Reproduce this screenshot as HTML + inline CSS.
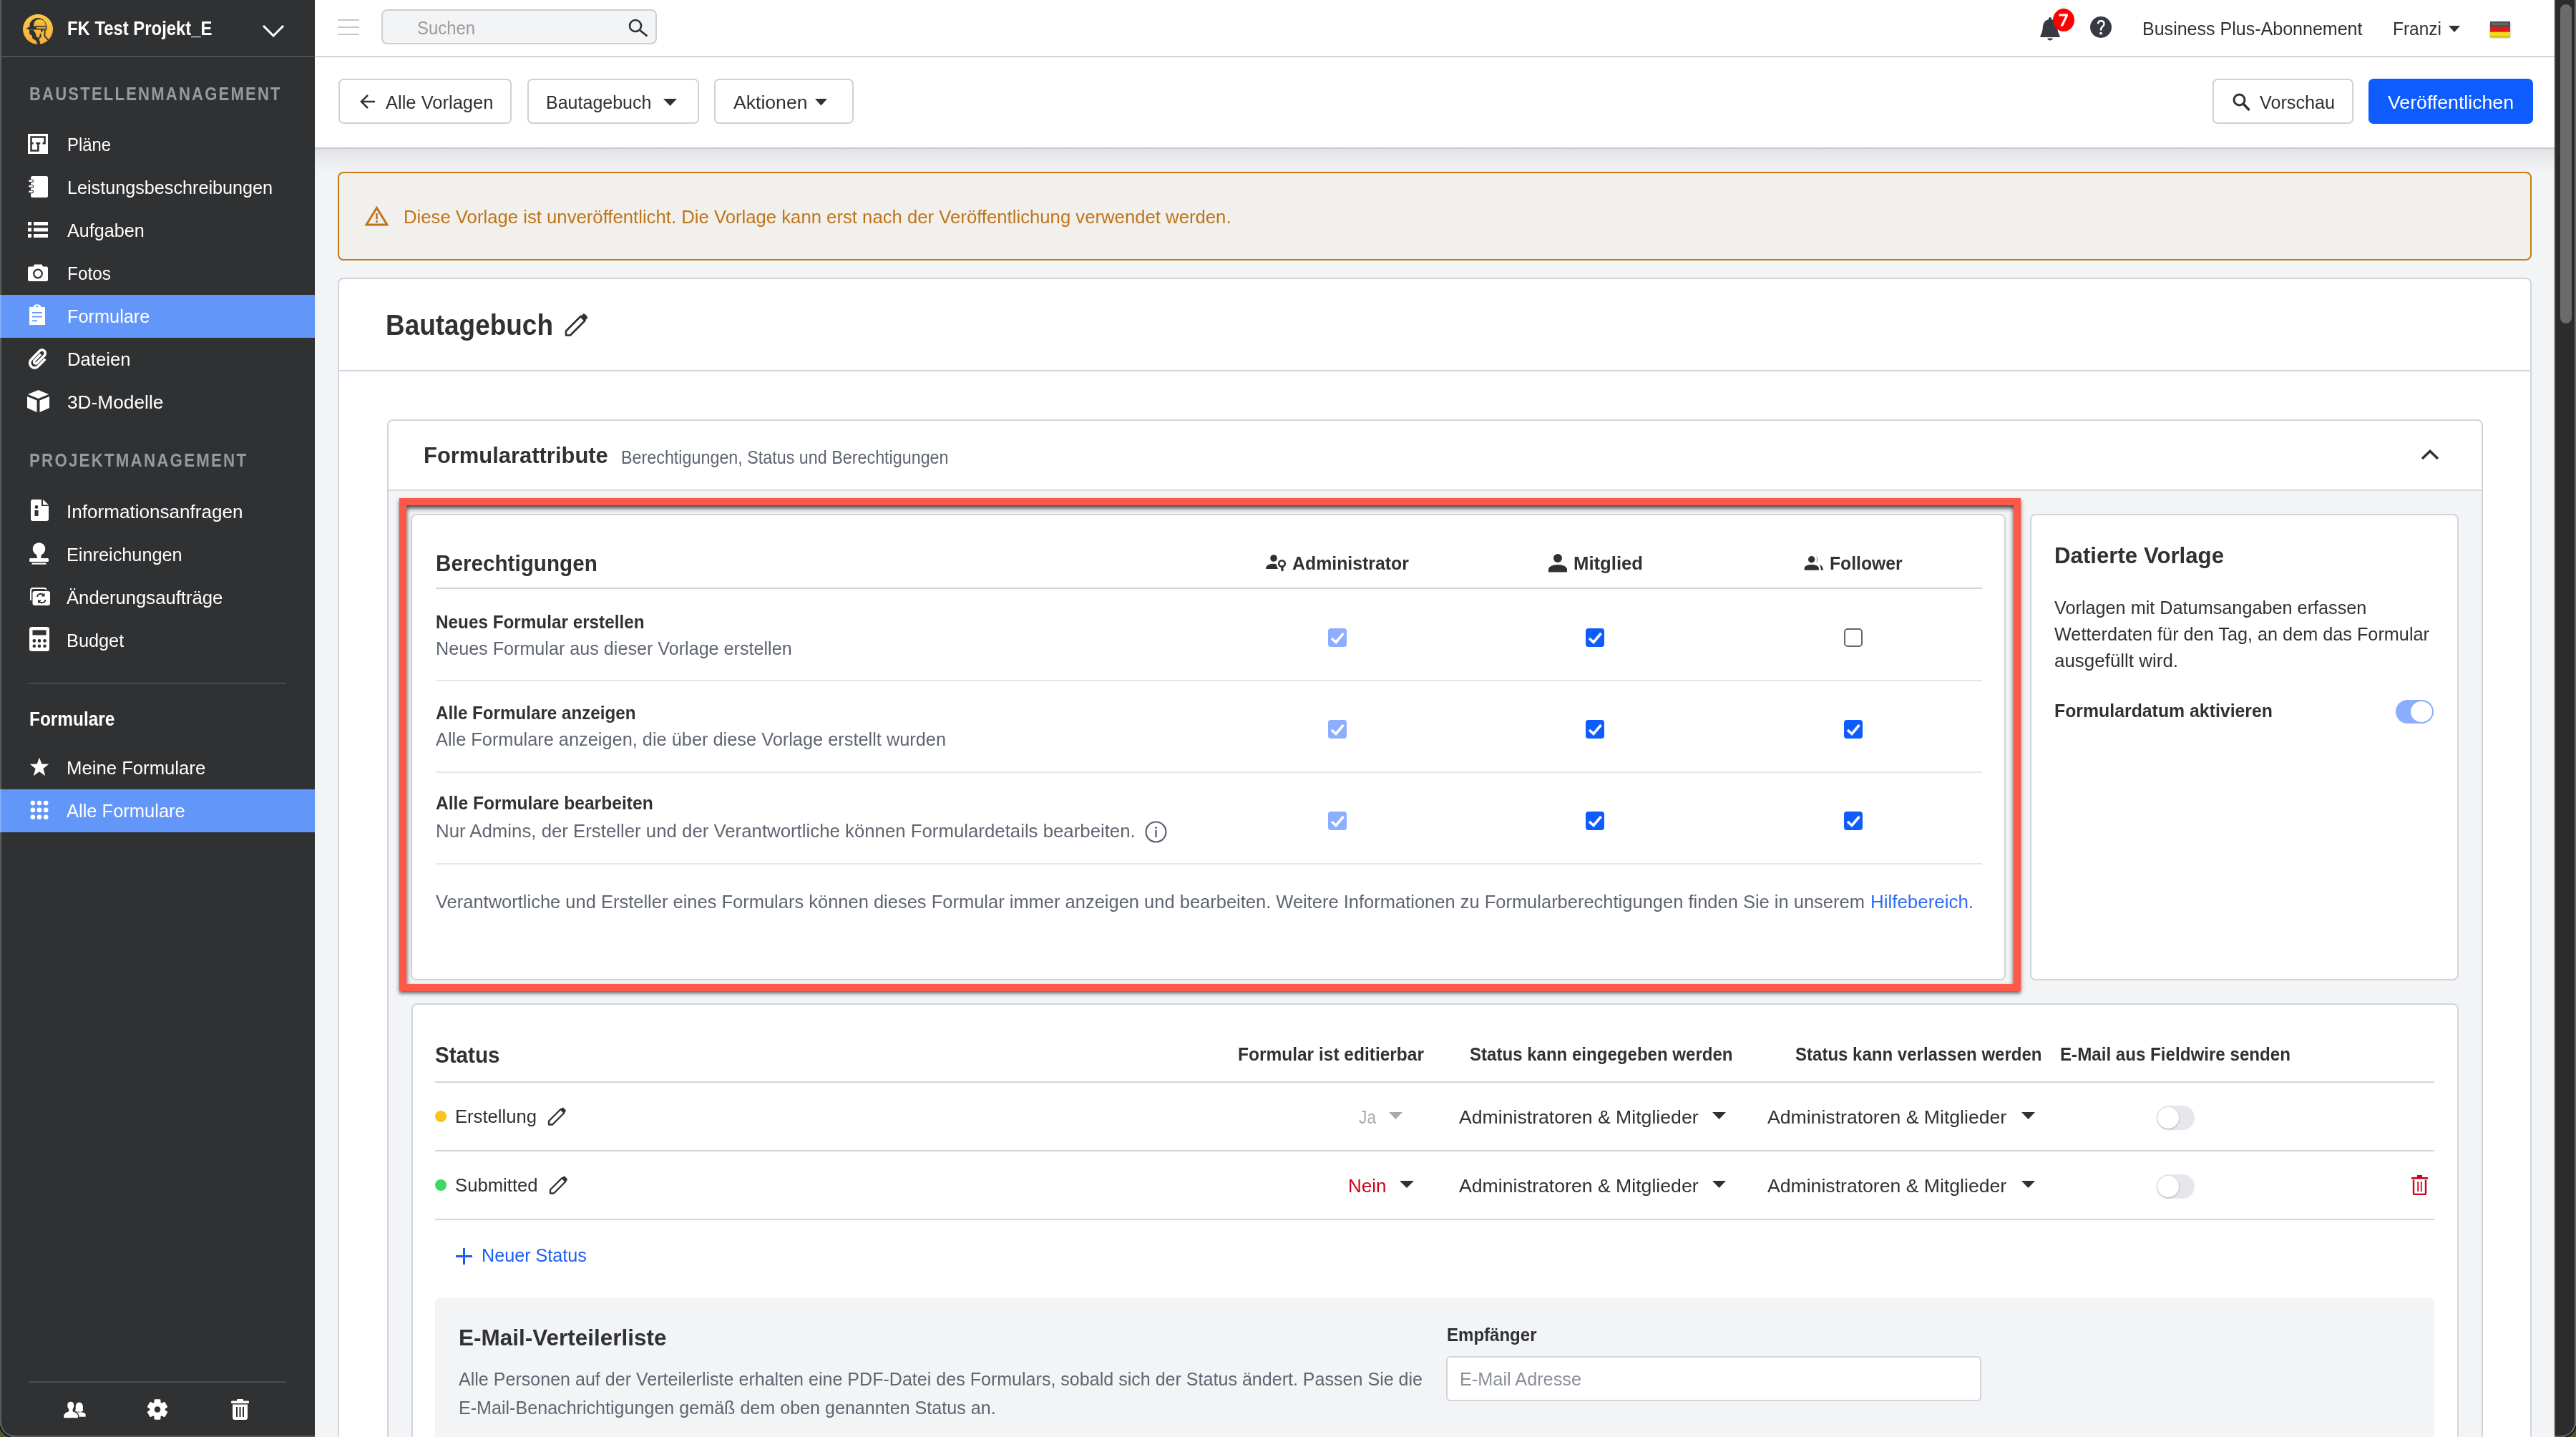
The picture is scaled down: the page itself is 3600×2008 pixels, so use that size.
<!DOCTYPE html><html><head><meta charset="utf-8"><style>
html,body{margin:0;padding:0;width:3600px;height:2008px;overflow:hidden;font-family:"Liberation Sans",sans-serif;}
</style></head><body>
<div style="position:absolute;left:0px;top:0px;width:3600px;height:2008px;background:#4a5a28;"></div>
<div style="position:absolute;left:0;top:0;width:3600px;height:2008px;border-radius:0 0 21px 21px;overflow:hidden;background:#f3f4f6;box-shadow:0 0 0 2px #0a0a0a;">
<div style="position:absolute;left:0px;top:0px;width:440px;height:2008px;background:#303133;"></div>
<div style="position:absolute;left:2px;top:78px;width:438px;height:2px;background:#4f5053;"></div>
<svg style="position:absolute;left:30px;top:18px;" width="46" height="46" viewBox="0 0 46 46"><defs><linearGradient id="lg" x1="0" y1="0" x2="0" y2="1"><stop offset="0" stop-color="#fdc942"/><stop offset="1" stop-color="#f2ae3b"/></linearGradient></defs><circle cx="23" cy="22.8" r="21" fill="url(#lg)"/><path fill="#303133" d="M6.2 22.3 L11.5 19 L11.8 14 L15 10 L20 7.3 L25 7 L30 9 L33.5 13.3 L35.2 18 L35.6 23.6 L11 23.6Z"/><path fill="url(#lg)" d="M17 18.6 C17 12 20.5 9 25 9 C29.5 9 33.8 12 33.8 18.6Z"/><rect x="20.8" y="20" width="13.2" height="1.9" fill="#e9ac3c"/><path fill="#303133" d="M11 23.5 L11.2 29.5 L14.5 31.5 L15.5 36 L20 38.5 L23 44.5 L26.5 44.5 L24.8 37 L26 34.5 L21.5 34.3 L20.3 31 L19.5 28 L16.5 24Z"/><path fill="#303133" d="M25 33 L26 29 L27.3 29 L27.6 33.5 L25.8 35.5Z M26.8 23.5 L31 23.5 L27.5 27.8Z"/><polyline points="32.9,23.4 32.3,32.5 37.4,38.2" fill="none" stroke="#303133" stroke-width="1.9"/></svg>
<div id="t1" style="position:absolute;left:94px;top:26.35px;font-size:28px;line-height:28px;white-space:nowrap;color:#ffffff;font-weight:700;transform:scaleX(0.8523);transform-origin:0 0;">FK Test Projekt_E</div>
<svg style="position:absolute;left:366px;top:34px;" width="32" height="18" viewBox="0 0 32 18"><polyline points="2,2 16,16 30,2" fill="none" stroke="#fff" stroke-width="3"/></svg>
<div id="t2" style="position:absolute;left:40.5px;top:118.74px;font-size:25px;line-height:25px;white-space:nowrap;color:#97999e;font-weight:700;letter-spacing:2.5px;transform:scaleX(0.8818);transform-origin:0 0;">BAUSTELLENMANAGEMENT</div>
<div style="position:absolute;left:0px;top:412px;width:440px;height:60px;background:#6396f9;"></div>
<div style="position:absolute;left:0px;top:1103px;width:440px;height:60px;background:#6396f9;"></div>
<div id="t3" style="position:absolute;left:94px;top:189.21px;font-size:26px;line-height:26px;white-space:nowrap;color:#ffffff;transform:scaleX(0.9173);transform-origin:0 0;">Pläne</div>
<div id="t4" style="position:absolute;left:94px;top:249.21px;font-size:26px;line-height:26px;white-space:nowrap;color:#ffffff;transform:scaleX(0.9686);transform-origin:0 0;">Leistungsbeschreibungen</div>
<div id="t5" style="position:absolute;left:94px;top:309.21px;font-size:26px;line-height:26px;white-space:nowrap;color:#ffffff;transform:scaleX(0.9668);transform-origin:0 0;">Aufgaben</div>
<div id="t6" style="position:absolute;left:94px;top:369.21px;font-size:26px;line-height:26px;white-space:nowrap;color:#ffffff;transform:scaleX(0.9369);transform-origin:0 0;">Fotos</div>
<div id="t7" style="position:absolute;left:94px;top:429.21px;font-size:26px;line-height:26px;white-space:nowrap;color:#ffffff;transform:scaleX(0.9738);transform-origin:0 0;">Formulare</div>
<div id="t8" style="position:absolute;left:94px;top:489.21px;font-size:26px;line-height:26px;white-space:nowrap;color:#ffffff;transform:scaleX(0.9888);transform-origin:0 0;">Dateien</div>
<div id="t9" style="position:absolute;left:94px;top:549.21px;font-size:26px;line-height:26px;white-space:nowrap;color:#ffffff;transform:scaleX(1.0105);transform-origin:0 0;">3D-Modelle</div>
<svg style="position:absolute;left:39px;top:187px;" width="28" height="28" viewBox="0 0 28 28"><rect width="28" height="28" fill="#fff"/><path fill="#303133" d="M3.25 3.25H24.8V5.75H3.25Z M3.25 3.25H5.75V24.8H3.25Z M3.25 22.3H15.6V24.8H3.25Z M22.3 3.25H24.8V14.4H22.3Z M20.5 12H24.8V14.4H20.5Z M11.2 12H17.3V14.4H11.2Z M13.1 12H15.6V24.8H13.1Z M5.75 12H7.7V14.4H5.75Z"/></svg>
<svg style="position:absolute;left:39px;top:246px;" width="28" height="30" viewBox="0 0 28 30"><rect x="4" y="0" width="24" height="30" rx="2.5" fill="#fff"/><rect x="0.5" y="5" width="7" height="3.6" rx="1.8" fill="#fff" stroke="#303133" stroke-width="1.2"/><rect x="0.5" y="12.5" width="7" height="3.6" rx="1.8" fill="#fff" stroke="#303133" stroke-width="1.2"/><rect x="0.5" y="20" width="7" height="3.6" rx="1.8" fill="#fff" stroke="#303133" stroke-width="1.2"/></svg>
<svg style="position:absolute;left:39px;top:310px;" width="28" height="22" viewBox="0 0 28 22"><path fill="#fff" d="M0 0H5V5H0Z M8 0H28V5H8Z M0 8.5H5V13.5H0Z M8 8.5H28V13.5H8Z M0 17H5V22H0Z M8 17H28V22H8Z"/></svg>
<svg style="position:absolute;left:39px;top:369px;" width="28" height="24" viewBox="0 0 28 24"><path fill="#fff" d="M7.5 3.5 L9 0.5 H19.5 L21 3.5 H26 Q28 3.5 28 5.5 V22 Q28 24 26 24 H2 Q0 24 0 22 V5.5 Q0 3.5 2 3.5Z"/><circle cx="14" cy="13.5" r="5.8" fill="none" stroke="#303133" stroke-width="2.2"/></svg>
<svg style="position:absolute;left:41px;top:425px;" width="22" height="29" viewBox="0 0 22 29"><path fill="#fff" d="M0 4 H5 L7 1.5 Q11 -1 15 1.5 L17 4 H22 V29 H0Z"/><circle cx="11" cy="3.2" r="1.3" fill="#6396f9"/><rect x="4" y="11" width="14" height="1.8" fill="#6396f9"/><rect x="4" y="16.7" width="14" height="1.8" fill="#6396f9"/><rect x="4" y="22.4" width="7" height="1.8" fill="#6396f9"/></svg>
<svg style="position:absolute;left:40px;top:487px;" width="25" height="29" viewBox="0 0 448 512"><path fill="#fff" d="M43.246 466.142c-58.43-60.289-57.341-157.511 1.386-217.581L254.392 34c44.316-45.332 116.351-45.336 160.671 0 43.89 44.894 43.943 117.329 0 162.276L232.214 383.128c-29.855 30.537-78.633 30.111-107.982-.998-28.275-29.97-27.368-77.473 1.452-106.953l143.743-146.835c6.182-6.314 16.312-6.422 22.626-.241l22.861 22.379c6.315 6.182 6.422 16.312.241 22.626L171.427 319.927c-4.932 5.045-5.236 13.428-.648 18.292 4.372 4.634 11.245 4.711 15.688.165l182.849-186.851c19.613-20.062 19.613-52.725-.011-72.798-19.189-19.627-49.957-19.637-69.154 0L90.39 293.295c-34.763 35.56-35.299 93.12-1.191 128.313 34.01 35.093 88.985 35.137 123.058.286l172.06-175.999c6.177-6.319 16.307-6.433 22.626-.256l22.877 22.362c6.319 6.177 6.434 16.307.256 22.626l-172.06 175.998c-59.576 60.938-155.943 60.216-214.77-.483z"/></svg>
<svg style="position:absolute;left:38px;top:545px;" width="31" height="31" viewBox="0 0 31 31"><path fill="#fff" d="M15.5 0 L30 6 L15.5 12 L1 6Z M0 9 L13.5 14.5 V31 L0 25Z M17.5 14.5 L31 9 V25 L17.5 31Z"/></svg>
<div id="t10" style="position:absolute;left:40.5px;top:630.74px;font-size:25px;line-height:25px;white-space:nowrap;color:#97999e;font-weight:700;letter-spacing:2.5px;transform:scaleX(0.8912);transform-origin:0 0;">PROJEKTMANAGEMENT</div>
<div id="t11" style="position:absolute;left:93px;top:702.21px;font-size:26px;line-height:26px;white-space:nowrap;color:#ffffff;transform:scaleX(1.0028);transform-origin:0 0;">Informationsanfragen</div>
<div id="t12" style="position:absolute;left:93px;top:762.21px;font-size:26px;line-height:26px;white-space:nowrap;color:#ffffff;transform:scaleX(0.9723);transform-origin:0 0;">Einreichungen</div>
<div id="t13" style="position:absolute;left:93px;top:822.21px;font-size:26px;line-height:26px;white-space:nowrap;color:#ffffff;transform:scaleX(0.9873);transform-origin:0 0;">Änderungsaufträge</div>
<div id="t14" style="position:absolute;left:93px;top:882.21px;font-size:26px;line-height:26px;white-space:nowrap;color:#ffffff;transform:scaleX(0.9733);transform-origin:0 0;">Budget</div>
<svg style="position:absolute;left:43px;top:698px;" width="25" height="31" viewBox="0 0 25 31"><path fill="#fff" d="M3 0 H15 V9 H25 V27 Q25 30 22 30 H3 Q0 30 0 27 V3 Q0 0 3 0Z M17 0 L25 7.5 H17Z"/><circle cx="8" cy="10.5" r="2.4" fill="#303133"/><rect x="5.5" y="15" width="5" height="8" fill="#303133"/></svg>
<svg style="position:absolute;left:41px;top:758px;" width="27" height="31" viewBox="0 0 27 31"><circle cx="13.5" cy="9" r="8.8" fill="#fff"/><path fill="#fff" d="M9.5 14 H17.5 L16 22 H11Z"/><rect x="0" y="22" width="27" height="5" rx="1.5" fill="#fff"/><rect x="3.5" y="28.5" width="20" height="2.2" fill="#fff"/></svg>
<svg style="position:absolute;left:40px;top:821px;" width="30" height="25" viewBox="0 0 30 25"><path fill="none" stroke="#fff" stroke-width="2" d="M3 18 V4 Q3 1 6 1 H22 Q24 1 24.5 3"/><rect x="5.5" y="5" width="24.5" height="20" rx="3" fill="#fff"/><path fill="none" stroke="#303133" stroke-width="2" d="M12 13 Q12.5 9 17 8.8 Q20 8.8 21.5 11 M23.5 17 Q23 21 18.5 21.2 Q15.5 21.2 14 19"/><path fill="#303133" d="M22.5 7.5 V12.5 H17.5Z M13 22.5 V17.5 H18Z"/></svg>
<svg style="position:absolute;left:41px;top:876px;" width="28" height="34" viewBox="0 0 28 34"><rect x="0" y="0" width="28" height="34" rx="3.5" fill="#fff"/><rect x="4.5" y="4.5" width="19" height="7" fill="#303133"/><circle cx="6.8" cy="19.4" r="2.3" fill="#303133"/><circle cx="6.8" cy="26.7" r="2.3" fill="#303133"/><circle cx="14" cy="19.4" r="2.3" fill="#303133"/><circle cx="14" cy="26.7" r="2.3" fill="#303133"/><circle cx="21.5" cy="19.4" r="2.3" fill="#303133"/><circle cx="21.5" cy="26.7" r="2.3" fill="#303133"/></svg>
<div style="position:absolute;left:40px;top:954px;width:360px;height:2px;background:#4a4b4e;"></div>
<div id="t15" style="position:absolute;left:40.5px;top:990.85px;font-size:28px;line-height:28px;white-space:nowrap;color:#ffffff;font-weight:700;transform:scaleX(0.8722);transform-origin:0 0;">Formulare</div>
<div id="t16" style="position:absolute;left:93px;top:1060.21px;font-size:26px;line-height:26px;white-space:nowrap;color:#ffffff;transform:scaleX(0.9883);transform-origin:0 0;">Meine Formulare</div>
<div id="t17" style="position:absolute;left:93px;top:1120.21px;font-size:26px;line-height:26px;white-space:nowrap;color:#ffffff;transform:scaleX(0.9805);transform-origin:0 0;">Alle Formulare</div>
<svg style="position:absolute;left:41px;top:1058px;" width="28" height="27" viewBox="0 0 28 27"><path fill="#fff" d="M14 0.5 L17.3 9.6 L27.3 9.8 L19.4 16 L22.3 26.2 L14 20.2 L5.7 26.2 L8.6 16 L0.7 9.8 L10.7 9.6Z"/></svg>
<svg style="position:absolute;left:42px;top:1118px;" width="26" height="27" viewBox="0 0 26 27"><circle cx="3.85" cy="4.1" r="3.3" fill="#fff"/><circle cx="3.85" cy="13.9" r="3.3" fill="#fff"/><circle cx="3.85" cy="23.7" r="3.3" fill="#fff"/><circle cx="13" cy="4.1" r="3.3" fill="#fff"/><circle cx="13" cy="13.9" r="3.3" fill="#fff"/><circle cx="13" cy="23.7" r="3.3" fill="#fff"/><circle cx="22.15" cy="4.1" r="3.3" fill="#fff"/><circle cx="22.15" cy="13.9" r="3.3" fill="#fff"/><circle cx="22.15" cy="23.7" r="3.3" fill="#fff"/></svg>
<div style="position:absolute;left:40px;top:1930px;width:360px;height:2px;background:#4a4b4e;"></div>
<svg style="position:absolute;left:84px;top:1952px;" width="40" height="36" viewBox="0 0 40 36"><ellipse cx="26.8" cy="13.2" rx="5" ry="5.8" fill="#fff"/><path fill="#fff" d="M21.8 13 Q22 19 20.5 19.5 L24 21 Q27 22 29 21 L32.5 19 Q31.5 17 31.8 13Z M24 20.5 Q31 20.5 35.6 23.5 V27.8 H24Z"/><g fill="#fff" stroke="#303133" stroke-width="1.4"><path d="M4.5 30 V25.5 Q5.5 22 11.5 19.8 V17.5 Q9.5 15 9.5 12 Q9.5 6 14.8 6 Q20 6 20 12 Q20 15 18.3 17.5 V19.8 Q24.5 22 25.6 25.5 V30Z"/></g></svg>
<svg style="position:absolute;left:206px;top:1955px;" width="28" height="29" viewBox="0 0 28 29"><path fill="#fff" stroke="#fff" stroke-width="2.4" stroke-linejoin="round" d="M18.70 6.35 L17.44 5.54 L17.24 1.50 L10.76 1.50 L10.56 5.54 L9.30 6.35 L7.96 7.04 L4.36 5.19 L1.12 10.81 L4.52 13.00 L4.59 14.50 L4.52 16.00 L1.12 18.19 L4.36 23.81 L7.96 21.96 L9.30 22.65 L10.56 23.46 L10.76 27.50 L17.24 27.50 L17.44 23.46 L18.70 22.65 L20.04 21.96 L23.64 23.81 L26.88 18.19 L23.48 16.00 L23.41 14.50 L23.48 13.00 L26.88 10.81 L23.64 5.19 L20.04 7.04Z"/><circle cx="14" cy="14.5" r="4.3" fill="#303133"/></svg>
<svg style="position:absolute;left:323px;top:1955px;" width="26" height="29" viewBox="0 0 26 29"><rect x="0" y="2.5" width="25" height="3.5" rx="1.2" fill="#fff"/><rect x="8" y="0" width="9" height="3" rx="1.2" fill="#fff"/><path fill="#fff" d="M2 7.5 H23 V26 Q23 29 20 29 H5 Q2 29 2 26Z"/><rect x="7" y="11" width="2" height="14" fill="#303133"/><rect x="11.5" y="11" width="2" height="14" fill="#303133"/><rect x="16" y="11" width="2" height="14" fill="#303133"/></svg>
<div style="position:absolute;left:440px;top:0px;width:3130px;height:78px;background:#fff;"></div>
<div style="position:absolute;left:440px;top:78px;width:3130px;height:2px;background:#d4d4d4;"></div>
<div style="position:absolute;left:472px;top:27px;width:30px;height:2px;background:#c8c8c8;"></div>
<div style="position:absolute;left:472px;top:37px;width:30px;height:2px;background:#c8c8c8;"></div>
<div style="position:absolute;left:472px;top:47px;width:30px;height:2px;background:#c8c8c8;"></div>
<div style="position:absolute;left:533px;top:13px;width:385px;height:49px;background:#f3f4f6;border:2px solid #cfcfcf;border-radius:8px;box-sizing:border-box;"></div>
<div id="t18" style="position:absolute;left:583px;top:26.11px;font-size:26px;line-height:26px;white-space:nowrap;color:#9b9b9b;transform:scaleX(0.9184);transform-origin:0 0;">Suchen</div>
<svg style="position:absolute;left:878px;top:26px;" width="28" height="26" viewBox="0 0 28 26"><circle cx="10" cy="10" r="8" fill="none" stroke="#303133" stroke-width="2.6"/><line x1="16" y1="16" x2="26.5" y2="24.5" stroke="#303133" stroke-width="2.8"/></svg>
<svg style="position:absolute;left:2850px;top:23px;" width="30" height="34" viewBox="0 0 30 34"><path fill="#363a43" d="M15 1 Q17 1 17 3 V4 Q24 5.5 25 13.5 Q25.5 22 28.5 27 Q29.5 29 27 29 H3 Q0.5 29 1.5 27 Q4.5 22 5 13.5 Q6 5.5 13 4 V3 Q13 1 15 1Z M11 30.5 H19 Q18 33.5 15 33.5 Q12 33.5 11 30.5Z"/></svg>
<svg style="position:absolute;left:2868px;top:11px;" width="32" height="34" viewBox="0 0 32 34"><ellipse cx="16" cy="17" rx="15" ry="16" fill="#ff0000"/><path fill="#fff" d="M9.5 8.5 H22 V11 L15 25.5 H11.5 L18.3 11.5 H9.5Z"/></svg>
<svg style="position:absolute;left:2921px;top:23px;" width="30" height="30" viewBox="0 0 30 30"><circle cx="15" cy="15" r="15" fill="#363a43"/><path fill="none" stroke="#fff" stroke-width="2.4" d="M11 10.5 Q11 6.2 15.2 6.2 Q19.5 6.2 19.5 10.2 Q19.5 12.6 17.2 14.3 Q15 15.9 15 19.5"/><circle cx="15" cy="23.6" r="1.9" fill="#fff"/></svg>
<div id="t19" style="position:absolute;left:2994px;top:26.61px;font-size:26px;line-height:26px;white-space:nowrap;color:#303133;transform:scaleX(0.9627);transform-origin:0 0;">Business Plus-Abonnement</div>
<div id="t20" style="position:absolute;left:3344px;top:26.61px;font-size:26px;line-height:26px;white-space:nowrap;color:#303133;transform:scaleX(0.9405);transform-origin:0 0;">Franzi</div>
<svg style="position:absolute;left:3422px;top:36px;" width="16" height="9" viewBox="0 0 16 9"><path d="M0 0H16L8 9Z" fill="#303133"/></svg>
<svg style="position:absolute;left:3478px;top:28px;" width="32" height="26" viewBox="0 0 32 26"><rect x="2" y="2" width="28" height="22" rx="1.5" fill="#000" style="filter:drop-shadow(0 1px 1.5px rgba(0,0,0,.35))"/><rect x="2" y="2" width="28" height="8" fill="#4e4e4e"/><rect x="4" y="4" width="24" height="3" fill="#666"/><rect x="2" y="9.5" width="28" height="7" fill="#de1a1a"/><rect x="2" y="16.5" width="28" height="7.5" fill="#f4dc17"/><rect x="2" y="22.5" width="28" height="1.5" fill="#cdb412"/></svg>
<div style="position:absolute;left:440px;top:80px;width:3130px;height:126px;background:#fff;"></div>
<div style="position:absolute;left:440px;top:206px;width:3130px;height:2px;background:#c9cacf;"></div>
<div style="position:absolute;left:440px;top:208px;width:3130px;height:36px;background:linear-gradient(rgba(0,0,0,0.075),rgba(0,0,0,0.02) 60%,rgba(0,0,0,0));"></div>
<div style="position:absolute;left:473px;top:110px;width:242px;height:63px;background:#fff;border:2px solid #d0d1d6;border-radius:7px;box-sizing:border-box;"></div>
<div style="position:absolute;left:737px;top:110px;width:240px;height:63px;background:#fff;border:2px solid #d0d1d6;border-radius:7px;box-sizing:border-box;"></div>
<div style="position:absolute;left:998px;top:110px;width:195px;height:63px;background:#fff;border:2px solid #d0d1d6;border-radius:7px;box-sizing:border-box;"></div>
<div style="position:absolute;left:3092px;top:110px;width:197px;height:63px;background:#fff;border:2px solid #d0d1d6;border-radius:7px;box-sizing:border-box;"></div>
<div style="position:absolute;left:3310px;top:110px;width:230px;height:63px;background:#0f5cfe;border:2px solid #0f5cfe;border-radius:7px;box-sizing:border-box;"></div>
<svg style="position:absolute;left:503px;top:131px;" width="22" height="22" viewBox="0 0 22 22"><path fill="none" stroke="#303133" stroke-width="2.6" d="M21 11 H2.5 M11 2 L2 11 L11 20"/></svg>
<div id="t21" style="position:absolute;left:539px;top:130.11px;font-size:26px;line-height:26px;white-space:nowrap;color:#303133;transform:scaleX(0.9817);transform-origin:0 0;">Alle Vorlagen</div>
<div id="t22" style="position:absolute;left:763px;top:130.11px;font-size:26px;line-height:26px;white-space:nowrap;color:#303133;transform:scaleX(0.9622);transform-origin:0 0;">Bautagebuch</div>
<svg style="position:absolute;left:927px;top:138px;" width="19" height="10" viewBox="0 0 19 10"><path d="M0 0H19L9.5 10Z" fill="#303133"/></svg>
<div id="t23" style="position:absolute;left:1024.5px;top:130.11px;font-size:26px;line-height:26px;white-space:nowrap;color:#303133;transform:scaleX(1.0227);transform-origin:0 0;">Aktionen</div>
<svg style="position:absolute;left:1139px;top:138px;" width="17" height="10" viewBox="0 0 17 10"><path d="M0 0H17L8.5 9.5Z" fill="#303133"/></svg>
<svg style="position:absolute;left:3120px;top:130px;" width="25" height="26" viewBox="0 0 25 26"><circle cx="9.5" cy="9.5" r="7.5" fill="none" stroke="#303133" stroke-width="3"/><line x1="15" y1="15" x2="23.5" y2="24" stroke="#303133" stroke-width="3.4"/></svg>
<div id="t24" style="position:absolute;left:3158px;top:130.11px;font-size:26px;line-height:26px;white-space:nowrap;color:#303133;transform:scaleX(0.9686);transform-origin:0 0;">Vorschau</div>
<div id="t25" style="position:absolute;left:3337px;top:130.11px;font-size:26px;line-height:26px;white-space:nowrap;color:#ffffff;transform:scaleX(1.0262);transform-origin:0 0;">Veröffentlichen</div>
<div style="position:absolute;left:472px;top:240px;width:3066px;height:124px;background:#f1f0ed;border:2px solid #c67a17;border-radius:8px;box-sizing:border-box;"></div>
<svg style="position:absolute;left:510px;top:288px;" width="33" height="28" viewBox="0 0 33 28"><path fill="none" stroke="#c07418" stroke-width="3" d="M16.5 2.5 L31 26 H2Z"/><rect x="15.2" y="10" width="2.6" height="8.5" fill="#c07418"/><circle cx="16.5" cy="21.7" r="1.6" fill="#c07418"/></svg>
<div id="t26" style="position:absolute;left:564px;top:289.91px;font-size:26px;line-height:26px;white-space:nowrap;color:#c07418;transform:scaleX(0.9887);transform-origin:0 0;">Diese Vorlage ist unveröffentlicht. Die Vorlage kann erst nach der Veröffentlichung verwendet werden.</div>
<div style="position:absolute;left:472px;top:388px;width:3066px;height:1642px;background:#fff;border:2px solid #d1d5db;border-radius:8px;box-sizing:border-box;"></div>
<div id="t27" style="position:absolute;left:539px;top:433.78px;font-size:40px;line-height:40px;white-space:nowrap;color:#303133;font-weight:700;transform:scaleX(0.9234);transform-origin:0 0;">Bautagebuch</div>
<svg style="position:absolute;left:788px;top:438px;" width="34" height="33" viewBox="0 0 34 33"><path fill="none" stroke="#303133" stroke-width="2.6" stroke-linejoin="round" d="M3 24.5 L23.5 4 L29.5 10 L9 30.5 H3Z"/><path fill="#303133" d="M23.5 4 L26.5 1 Q28 -0.3 29.5 1 L32.5 4 Q33.7 5.5 32.5 7 L29.5 10Z"/></svg>
<div style="position:absolute;left:474px;top:517px;width:3062px;height:2px;background:#d1d5db;"></div>
<div style="position:absolute;left:541px;top:586px;width:2929px;height:1444px;background:#f3f4f6;border:2px solid #d1d5db;border-radius:8px;box-sizing:border-box;"></div>
<div style="position:absolute;left:543px;top:588px;width:2925px;height:96px;background:#fff;border-radius:7px 7px 0 0;"></div>
<div style="position:absolute;left:543px;top:684px;width:2925px;height:2px;background:#dadada;"></div>
<div id="t28" style="position:absolute;left:591.8px;top:619.72px;font-size:32px;line-height:32px;white-space:nowrap;color:#303133;font-weight:700;transform:scaleX(0.9666);transform-origin:0 0;">Formularattribute</div>
<div id="t29" style="position:absolute;left:868px;top:625.61px;font-size:26px;line-height:26px;white-space:nowrap;color:#5f6571;transform:scaleX(0.8967);transform-origin:0 0;">Berechtigungen, Status und Berechtigungen</div>
<svg style="position:absolute;left:3383px;top:628px;" width="26" height="15" viewBox="0 0 26 15"><polyline points="2,13 13,2.5 24,13" fill="none" stroke="#303133" stroke-width="3.5"/></svg>
<div style="position:absolute;left:574px;top:718px;width:2229px;height:652px;background:#fff;border:2px solid #d1d5db;border-radius:8px;box-sizing:border-box;"></div>
<div id="t30" style="position:absolute;left:609px;top:770.82px;font-size:32px;line-height:32px;white-space:nowrap;color:#303133;font-weight:700;transform:scaleX(0.9269);transform-origin:0 0;">Berechtigungen</div>
<svg style="position:absolute;left:1769px;top:775px;" width="30" height="25" viewBox="0 0 30 25"><circle cx="11" cy="5" r="4.8" fill="#303133"/><path fill="#303133" d="M0 20 Q0 13 10 12.8 Q13.5 12.8 14.5 13.2 L17 20Z"/><circle cx="22.5" cy="12.5" r="4.3" fill="none" stroke="#303133" stroke-width="2.6"/><path fill="#303133" d="M21.3 15.5 H23.8 V17.5 L25.2 18.8 L23.8 20 L25.2 21.5 L23 23.7 L21.3 22Z"/></svg>
<div id="t31" style="position:absolute;left:1806px;top:773.61px;font-size:26px;line-height:26px;white-space:nowrap;color:#303133;font-weight:700;transform:scaleX(0.9560);transform-origin:0 0;">Administrator</div>
<svg style="position:absolute;left:2164px;top:770px;" width="26" height="30" viewBox="0 0 26 30"><circle cx="13" cy="10" r="6" fill="#303133"/><path fill="#303133" d="M0 29.6 V25 Q1.5 19.5 13 19 Q24.5 19.5 26 25 V29.6Z"/></svg>
<div id="t32" style="position:absolute;left:2199px;top:773.61px;font-size:26px;line-height:26px;white-space:nowrap;color:#303133;font-weight:700;transform:scaleX(0.9878);transform-origin:0 0;">Mitglied</div>
<svg style="position:absolute;left:2521px;top:775px;" width="28" height="22" viewBox="0 0 28 22"><circle cx="10.7" cy="6.7" r="4.7" fill="#303133"/><path fill="#303133" d="M17 2 Q21 6.5 17 11.5 Q19.5 6.5 17 2Z M0.7 21.7 V18.5 Q2 14 10.7 14 Q19.5 14 20.9 18.5 V21.7Z M22 14 Q26.5 15.5 27 21.7 H24 Q24 17 22 14Z"/></svg>
<div id="t33" style="position:absolute;left:2557px;top:773.61px;font-size:26px;line-height:26px;white-space:nowrap;color:#303133;font-weight:700;transform:scaleX(0.9495);transform-origin:0 0;">Follower</div>
<div style="position:absolute;left:609px;top:821px;width:2161px;height:2px;background:#d1d5db;"></div>
<div id="t34" style="position:absolute;left:609px;top:855.61px;font-size:26px;line-height:26px;white-space:nowrap;color:#303133;font-weight:700;transform:scaleX(0.9340);transform-origin:0 0;">Neues Formular erstellen</div>
<div id="t35" style="position:absolute;left:609px;top:892.61px;font-size:26px;line-height:26px;white-space:nowrap;color:#5f6571;transform:scaleX(0.9673);transform-origin:0 0;">Neues Formular aus dieser Vorlage erstellen</div>
<svg style="position:absolute;left:1856px;top:878px;" width="26" height="26" viewBox="0 0 26 26"><rect x="0" y="0" width="26" height="26" rx="4" fill="#8dadfe"/><path fill="none" stroke="#fff" stroke-width="3.6" d="M5 14 L11 19.5 L21.5 7"/></svg>
<svg style="position:absolute;left:2216px;top:878px;" width="26" height="26" viewBox="0 0 26 26"><rect x="0" y="0" width="26" height="26" rx="4" fill="#0f5cfe"/><path fill="none" stroke="#fff" stroke-width="3.6" d="M5 14 L11 19.5 L21.5 7"/></svg>
<svg style="position:absolute;left:2577px;top:878px;" width="26" height="26" viewBox="0 0 26 26"><rect x="1" y="1" width="24" height="24" rx="4" fill="#fff" stroke="#666" stroke-width="2"/></svg>
<div id="t36" style="position:absolute;left:609px;top:983.11px;font-size:26px;line-height:26px;white-space:nowrap;color:#303133;font-weight:700;transform:scaleX(0.9298);transform-origin:0 0;">Alle Formulare anzeigen</div>
<div id="t37" style="position:absolute;left:609px;top:1020.11px;font-size:26px;line-height:26px;white-space:nowrap;color:#5f6571;transform:scaleX(0.9750);transform-origin:0 0;">Alle Formulare anzeigen, die über diese Vorlage erstellt wurden</div>
<svg style="position:absolute;left:1856px;top:1006px;" width="26" height="26" viewBox="0 0 26 26"><rect x="0" y="0" width="26" height="26" rx="4" fill="#8dadfe"/><path fill="none" stroke="#fff" stroke-width="3.6" d="M5 14 L11 19.5 L21.5 7"/></svg>
<svg style="position:absolute;left:2216px;top:1006px;" width="26" height="26" viewBox="0 0 26 26"><rect x="0" y="0" width="26" height="26" rx="4" fill="#0f5cfe"/><path fill="none" stroke="#fff" stroke-width="3.6" d="M5 14 L11 19.5 L21.5 7"/></svg>
<svg style="position:absolute;left:2577px;top:1006px;" width="26" height="26" viewBox="0 0 26 26"><rect x="0" y="0" width="26" height="26" rx="4" fill="#0f5cfe"/><path fill="none" stroke="#fff" stroke-width="3.6" d="M5 14 L11 19.5 L21.5 7"/></svg>
<div id="t38" style="position:absolute;left:609px;top:1109.21px;font-size:26px;line-height:26px;white-space:nowrap;color:#303133;font-weight:700;transform:scaleX(0.9467);transform-origin:0 0;">Alle Formulare bearbeiten</div>
<div id="t39" style="position:absolute;left:609px;top:1148.21px;font-size:26px;line-height:26px;white-space:nowrap;color:#5f6571;transform:scaleX(0.9920);transform-origin:0 0;">Nur Admins, der Ersteller und der Verantwortliche können Formulardetails bearbeiten.</div>
<svg style="position:absolute;left:1856px;top:1134px;" width="26" height="26" viewBox="0 0 26 26"><rect x="0" y="0" width="26" height="26" rx="4" fill="#8dadfe"/><path fill="none" stroke="#fff" stroke-width="3.6" d="M5 14 L11 19.5 L21.5 7"/></svg>
<svg style="position:absolute;left:2216px;top:1134px;" width="26" height="26" viewBox="0 0 26 26"><rect x="0" y="0" width="26" height="26" rx="4" fill="#0f5cfe"/><path fill="none" stroke="#fff" stroke-width="3.6" d="M5 14 L11 19.5 L21.5 7"/></svg>
<svg style="position:absolute;left:2577px;top:1134px;" width="26" height="26" viewBox="0 0 26 26"><rect x="0" y="0" width="26" height="26" rx="4" fill="#0f5cfe"/><path fill="none" stroke="#fff" stroke-width="3.6" d="M5 14 L11 19.5 L21.5 7"/></svg>
<svg style="position:absolute;left:1600px;top:1147px;" width="31" height="31" viewBox="0 0 31 31"><circle cx="15.5" cy="15.5" r="14" fill="none" stroke="#5f6470" stroke-width="2.2"/><circle cx="15.5" cy="9.5" r="1.5" fill="#5f6470"/><rect x="14.3" y="13" width="2.4" height="10" fill="#5f6470"/></svg>
<div style="position:absolute;left:609px;top:950px;width:2161px;height:2px;background:#e5e7eb;"></div>
<div style="position:absolute;left:609px;top:1078px;width:2161px;height:2px;background:#e5e7eb;"></div>
<div style="position:absolute;left:609px;top:1206px;width:2161px;height:2px;background:#e5e7eb;"></div>
<div id="t40" style="position:absolute;left:609px;top:1246.61px;font-size:26px;line-height:26px;white-space:nowrap;color:#5f6571;transform:scaleX(0.9802);transform-origin:0 0;">Verantwortliche und Ersteller eines Formulars können dieses Formular immer anzeigen und bearbeiten. Weitere Informationen zu Formularberechtigungen finden Sie in unserem</div>
<div id="t41" style="position:absolute;left:2614px;top:1246.61px;font-size:26px;line-height:26px;white-space:nowrap;color:#2d6cf5;transform:scaleX(0.9965);transform-origin:0 0;">Hilfebereich.</div>
<div style="position:absolute;left:558px;top:696px;width:2266px;height:689px;box-sizing:border-box;border:10.5px solid #fe5849;box-shadow:0 3px 5px rgba(0,0,0,0.6), inset 0 4px 6px rgba(0,0,0,0.75);"></div>
<div style="position:absolute;left:2837px;top:718px;width:599px;height:652px;background:#fff;border:2px solid #d1d5db;border-radius:8px;box-sizing:border-box;"></div>
<div id="t42" style="position:absolute;left:2871px;top:759.82px;font-size:32px;line-height:32px;white-space:nowrap;color:#303133;font-weight:700;transform:scaleX(0.9753);transform-origin:0 0;">Datierte Vorlage</div>
<div id="t43" style="position:absolute;left:2871px;top:835.61px;font-size:26px;line-height:26px;white-space:nowrap;color:#303133;transform:scaleX(0.9709);transform-origin:0 0;">Vorlagen mit Datumsangaben erfassen</div>
<div id="t44" style="position:absolute;left:2871px;top:872.61px;font-size:26px;line-height:26px;white-space:nowrap;color:#303133;transform:scaleX(0.9711);transform-origin:0 0;">Wetterdaten für den Tag, an dem das Formular</div>
<div id="t45" style="position:absolute;left:2871px;top:909.61px;font-size:26px;line-height:26px;white-space:nowrap;color:#303133;transform:scaleX(0.9977);transform-origin:0 0;">ausgefüllt wird.</div>
<div id="t46" style="position:absolute;left:2871px;top:979.61px;font-size:26px;line-height:26px;white-space:nowrap;color:#303133;font-weight:700;transform:scaleX(0.9552);transform-origin:0 0;">Formulardatum aktivieren</div>
<div style="position:absolute;left:3348px;top:978px;width:53px;height:33px;background:#8badfd;border-radius:17px;"></div>
<div style="position:absolute;left:3369px;top:980px;width:30px;height:29px;background:#fff;border-radius:50%;"></div>
<div style="position:absolute;left:575px;top:1402px;width:2861px;height:628px;background:#fff;border:2px solid #d1d5db;border-radius:8px;box-sizing:border-box;"></div>
<div id="t47" style="position:absolute;left:608px;top:1457.82px;font-size:32px;line-height:32px;white-space:nowrap;color:#303133;font-weight:700;transform:scaleX(0.9254);transform-origin:0 0;">Status</div>
<div id="t48" style="position:absolute;left:1730px;top:1460.11px;font-size:26px;line-height:26px;white-space:nowrap;color:#303133;font-weight:700;transform:scaleX(0.9420);transform-origin:0 0;">Formular ist editierbar</div>
<div id="t49" style="position:absolute;left:2054px;top:1460.11px;font-size:26px;line-height:26px;white-space:nowrap;color:#303133;font-weight:700;transform:scaleX(0.9250);transform-origin:0 0;">Status kann eingegeben werden</div>
<div id="t50" style="position:absolute;left:2509px;top:1460.11px;font-size:26px;line-height:26px;white-space:nowrap;color:#303133;font-weight:700;transform:scaleX(0.9241);transform-origin:0 0;">Status kann verlassen werden</div>
<div id="t51" style="position:absolute;left:2879px;top:1460.11px;font-size:26px;line-height:26px;white-space:nowrap;color:#303133;font-weight:700;transform:scaleX(0.9285);transform-origin:0 0;">E-Mail aus Fieldwire senden</div>
<div style="position:absolute;left:608px;top:1511px;width:2794px;height:2px;background:#d1d5db;"></div>
<div style="position:absolute;left:608px;top:1607px;width:2794px;height:2px;background:#d1d5db;"></div>
<div style="position:absolute;left:608px;top:1703px;width:2794px;height:2px;background:#d1d5db;"></div>
<div style="position:absolute;left:608px;top:1552px;width:16px;height:16px;border-radius:50%;background:#fcc419;"></div>
<div style="position:absolute;left:608px;top:1648px;width:16px;height:16px;border-radius:50%;background:#40d865;"></div>
<div id="t52" style="position:absolute;left:635.5px;top:1547.01px;font-size:26px;line-height:26px;white-space:nowrap;color:#303133;transform:scaleX(0.9853);transform-origin:0 0;">Erstellung</div>
<div id="t53" style="position:absolute;left:635.5px;top:1642.51px;font-size:26px;line-height:26px;white-space:nowrap;color:#303133;transform:scaleX(0.9880);transform-origin:0 0;">Submitted</div>
<svg style="position:absolute;left:765px;top:1547px;" width="27" height="26" viewBox="0 0 27 26"><path fill="none" stroke="#303133" stroke-width="2.3" stroke-linejoin="round" d="M2 19.5 L18.5 3 L23.5 8 L7 24.5 H2Z"/><path fill="#303133" d="M18.5 3 L20.5 1 Q21.5 0 22.5 1 L25.5 4 Q26.5 5 25.5 6 L23.5 8Z"/></svg>
<svg style="position:absolute;left:767px;top:1643px;" width="27" height="26" viewBox="0 0 27 26"><path fill="none" stroke="#303133" stroke-width="2.3" stroke-linejoin="round" d="M2 19.5 L18.5 3 L23.5 8 L7 24.5 H2Z"/><path fill="#303133" d="M18.5 3 L20.5 1 Q21.5 0 22.5 1 L25.5 4 Q26.5 5 25.5 6 L23.5 8Z"/></svg>
<div id="t54" style="position:absolute;left:1898.5px;top:1547.61px;font-size:26px;line-height:26px;white-space:nowrap;color:#aaaaaa;transform:scaleX(0.8764);transform-origin:0 0;">Ja</div>
<svg style="position:absolute;left:1941px;top:1554px;" width="19" height="11" viewBox="0 0 19 11"><path d="M0 0H19L9.5 10Z" fill="#aaaaaa"/></svg>
<div id="t55" style="position:absolute;left:1884px;top:1643.61px;font-size:26px;line-height:26px;white-space:nowrap;color:#d0021b;transform:scaleX(1.0019);transform-origin:0 0;">Nein</div>
<svg style="position:absolute;left:1956px;top:1650px;" width="20" height="11" viewBox="0 0 20 11"><path d="M0 0H20L10 10Z" fill="#303133"/></svg>
<div id="t56" style="position:absolute;left:2039px;top:1547.61px;font-size:26px;line-height:26px;white-space:nowrap;color:#303133;transform:scaleX(1.0245);transform-origin:0 0;">Administratoren &amp; Mitglieder</div>
<svg style="position:absolute;left:2393px;top:1554px;" width="19" height="11" viewBox="0 0 19 11"><path d="M0 0H19L9.5 10Z" fill="#303133"/></svg>
<div id="t57" style="position:absolute;left:2470.4px;top:1547.61px;font-size:26px;line-height:26px;white-space:nowrap;color:#303133;transform:scaleX(1.0233);transform-origin:0 0;">Administratoren &amp; Mitglieder</div>
<svg style="position:absolute;left:2825px;top:1554px;" width="19" height="11" viewBox="0 0 19 11"><path d="M0 0H19L9.5 10Z" fill="#303133"/></svg>
<div id="t58" style="position:absolute;left:2039px;top:1643.61px;font-size:26px;line-height:26px;white-space:nowrap;color:#303133;transform:scaleX(1.0245);transform-origin:0 0;">Administratoren &amp; Mitglieder</div>
<svg style="position:absolute;left:2393px;top:1650px;" width="19" height="11" viewBox="0 0 19 11"><path d="M0 0H19L9.5 10Z" fill="#303133"/></svg>
<div id="t59" style="position:absolute;left:2470.4px;top:1643.61px;font-size:26px;line-height:26px;white-space:nowrap;color:#303133;transform:scaleX(1.0233);transform-origin:0 0;">Administratoren &amp; Mitglieder</div>
<svg style="position:absolute;left:2825px;top:1650px;" width="19" height="11" viewBox="0 0 19 11"><path d="M0 0H19L9.5 10Z" fill="#303133"/></svg>
<div style="position:absolute;left:3014px;top:1545px;width:53px;height:34px;background:#e5e7eb;border-radius:17px;"></div>
<div style="position:absolute;left:3015px;top:1547px;width:30px;height:30px;background:#fff;border-radius:50%;box-shadow:0 1px 3px rgba(0,0,0,0.25);"></div>
<div style="position:absolute;left:3014px;top:1641px;width:53px;height:34px;background:#e5e7eb;border-radius:17px;"></div>
<div style="position:absolute;left:3015px;top:1643px;width:30px;height:30px;background:#fff;border-radius:50%;box-shadow:0 1px 3px rgba(0,0,0,0.25);"></div>
<svg style="position:absolute;left:3370px;top:1642px;" width="23" height="28" viewBox="0 0 23 28"><rect x="0" y="3" width="23" height="2.6" fill="#d0021b"/><rect x="8" y="0" width="7" height="3" fill="#d0021b"/><path fill="none" stroke="#d0021b" stroke-width="2.4" d="M3 6.5 V25.5 Q3 27 4.5 27 H18.5 Q20 27 20 25.5 V6.5"/><rect x="8.3" y="9" width="1.8" height="14" fill="#d0021b"/><rect x="12.9" y="9" width="1.8" height="14" fill="#d0021b"/></svg>
<svg style="position:absolute;left:636px;top:1743px;" width="25" height="25" viewBox="0 0 25 25"><path fill="none" stroke="#1a5ef5" stroke-width="3" d="M12.5 1 V24 M1 12.5 H24"/></svg>
<div id="t60" style="position:absolute;left:673px;top:1740.61px;font-size:26px;line-height:26px;white-space:nowrap;color:#1a5ef5;transform:scaleX(0.9684);transform-origin:0 0;">Neuer Status</div>
<div style="position:absolute;left:608px;top:1813px;width:2794px;height:217px;background:#f3f4f6;border-radius:8px;"></div>
<div id="t61" style="position:absolute;left:641px;top:1853.22px;font-size:32px;line-height:32px;white-space:nowrap;color:#303133;font-weight:700;transform:scaleX(0.9837);transform-origin:0 0;">E-Mail-Verteilerliste</div>
<div id="t62" style="position:absolute;left:641px;top:1913.61px;font-size:26px;line-height:26px;white-space:nowrap;color:#5f6571;transform:scaleX(0.9639);transform-origin:0 0;">Alle Personen auf der Verteilerliste erhalten eine PDF-Datei des Formulars, sobald sich der Status ändert. Passen Sie die</div>
<div id="t63" style="position:absolute;left:641px;top:1953.61px;font-size:26px;line-height:26px;white-space:nowrap;color:#5f6571;transform:scaleX(0.9653);transform-origin:0 0;">E-Mail-Benachrichtigungen gemäß dem oben genannten Status an.</div>
<div id="t64" style="position:absolute;left:2022px;top:1851.61px;font-size:26px;line-height:26px;white-space:nowrap;color:#303133;font-weight:700;transform:scaleX(0.9242);transform-origin:0 0;">Empfänger</div>
<div style="position:absolute;left:2021px;top:1895px;width:748px;height:63px;background:#fff;border:2px solid #d1d5db;border-radius:6px;box-sizing:border-box;"></div>
<div id="t65" style="position:absolute;left:2040px;top:1913.61px;font-size:26px;line-height:26px;white-space:nowrap;color:#8a8f98;transform:scaleX(0.9725);transform-origin:0 0;">E-Mail Adresse</div>
<div style="position:absolute;left:3570px;top:0px;width:30px;height:2008px;background:#2c2c2c;"></div>
<div style="position:absolute;left:3571px;top:0px;width:1px;height:2008px;background:#3d3d3d;"></div>
<div style="position:absolute;left:3578px;top:6px;width:16px;height:446px;background:#6b6b6b;border-radius:8px;"></div>
</div>
<div style="position:absolute;left:0;top:0;width:3600px;height:2008px;box-sizing:border-box;border:2px solid rgba(255,255,255,0.21);border-right-color:rgba(255,255,255,0.3);border-top:none;border-radius:0 0 21px 21px;"></div>
</body></html>
